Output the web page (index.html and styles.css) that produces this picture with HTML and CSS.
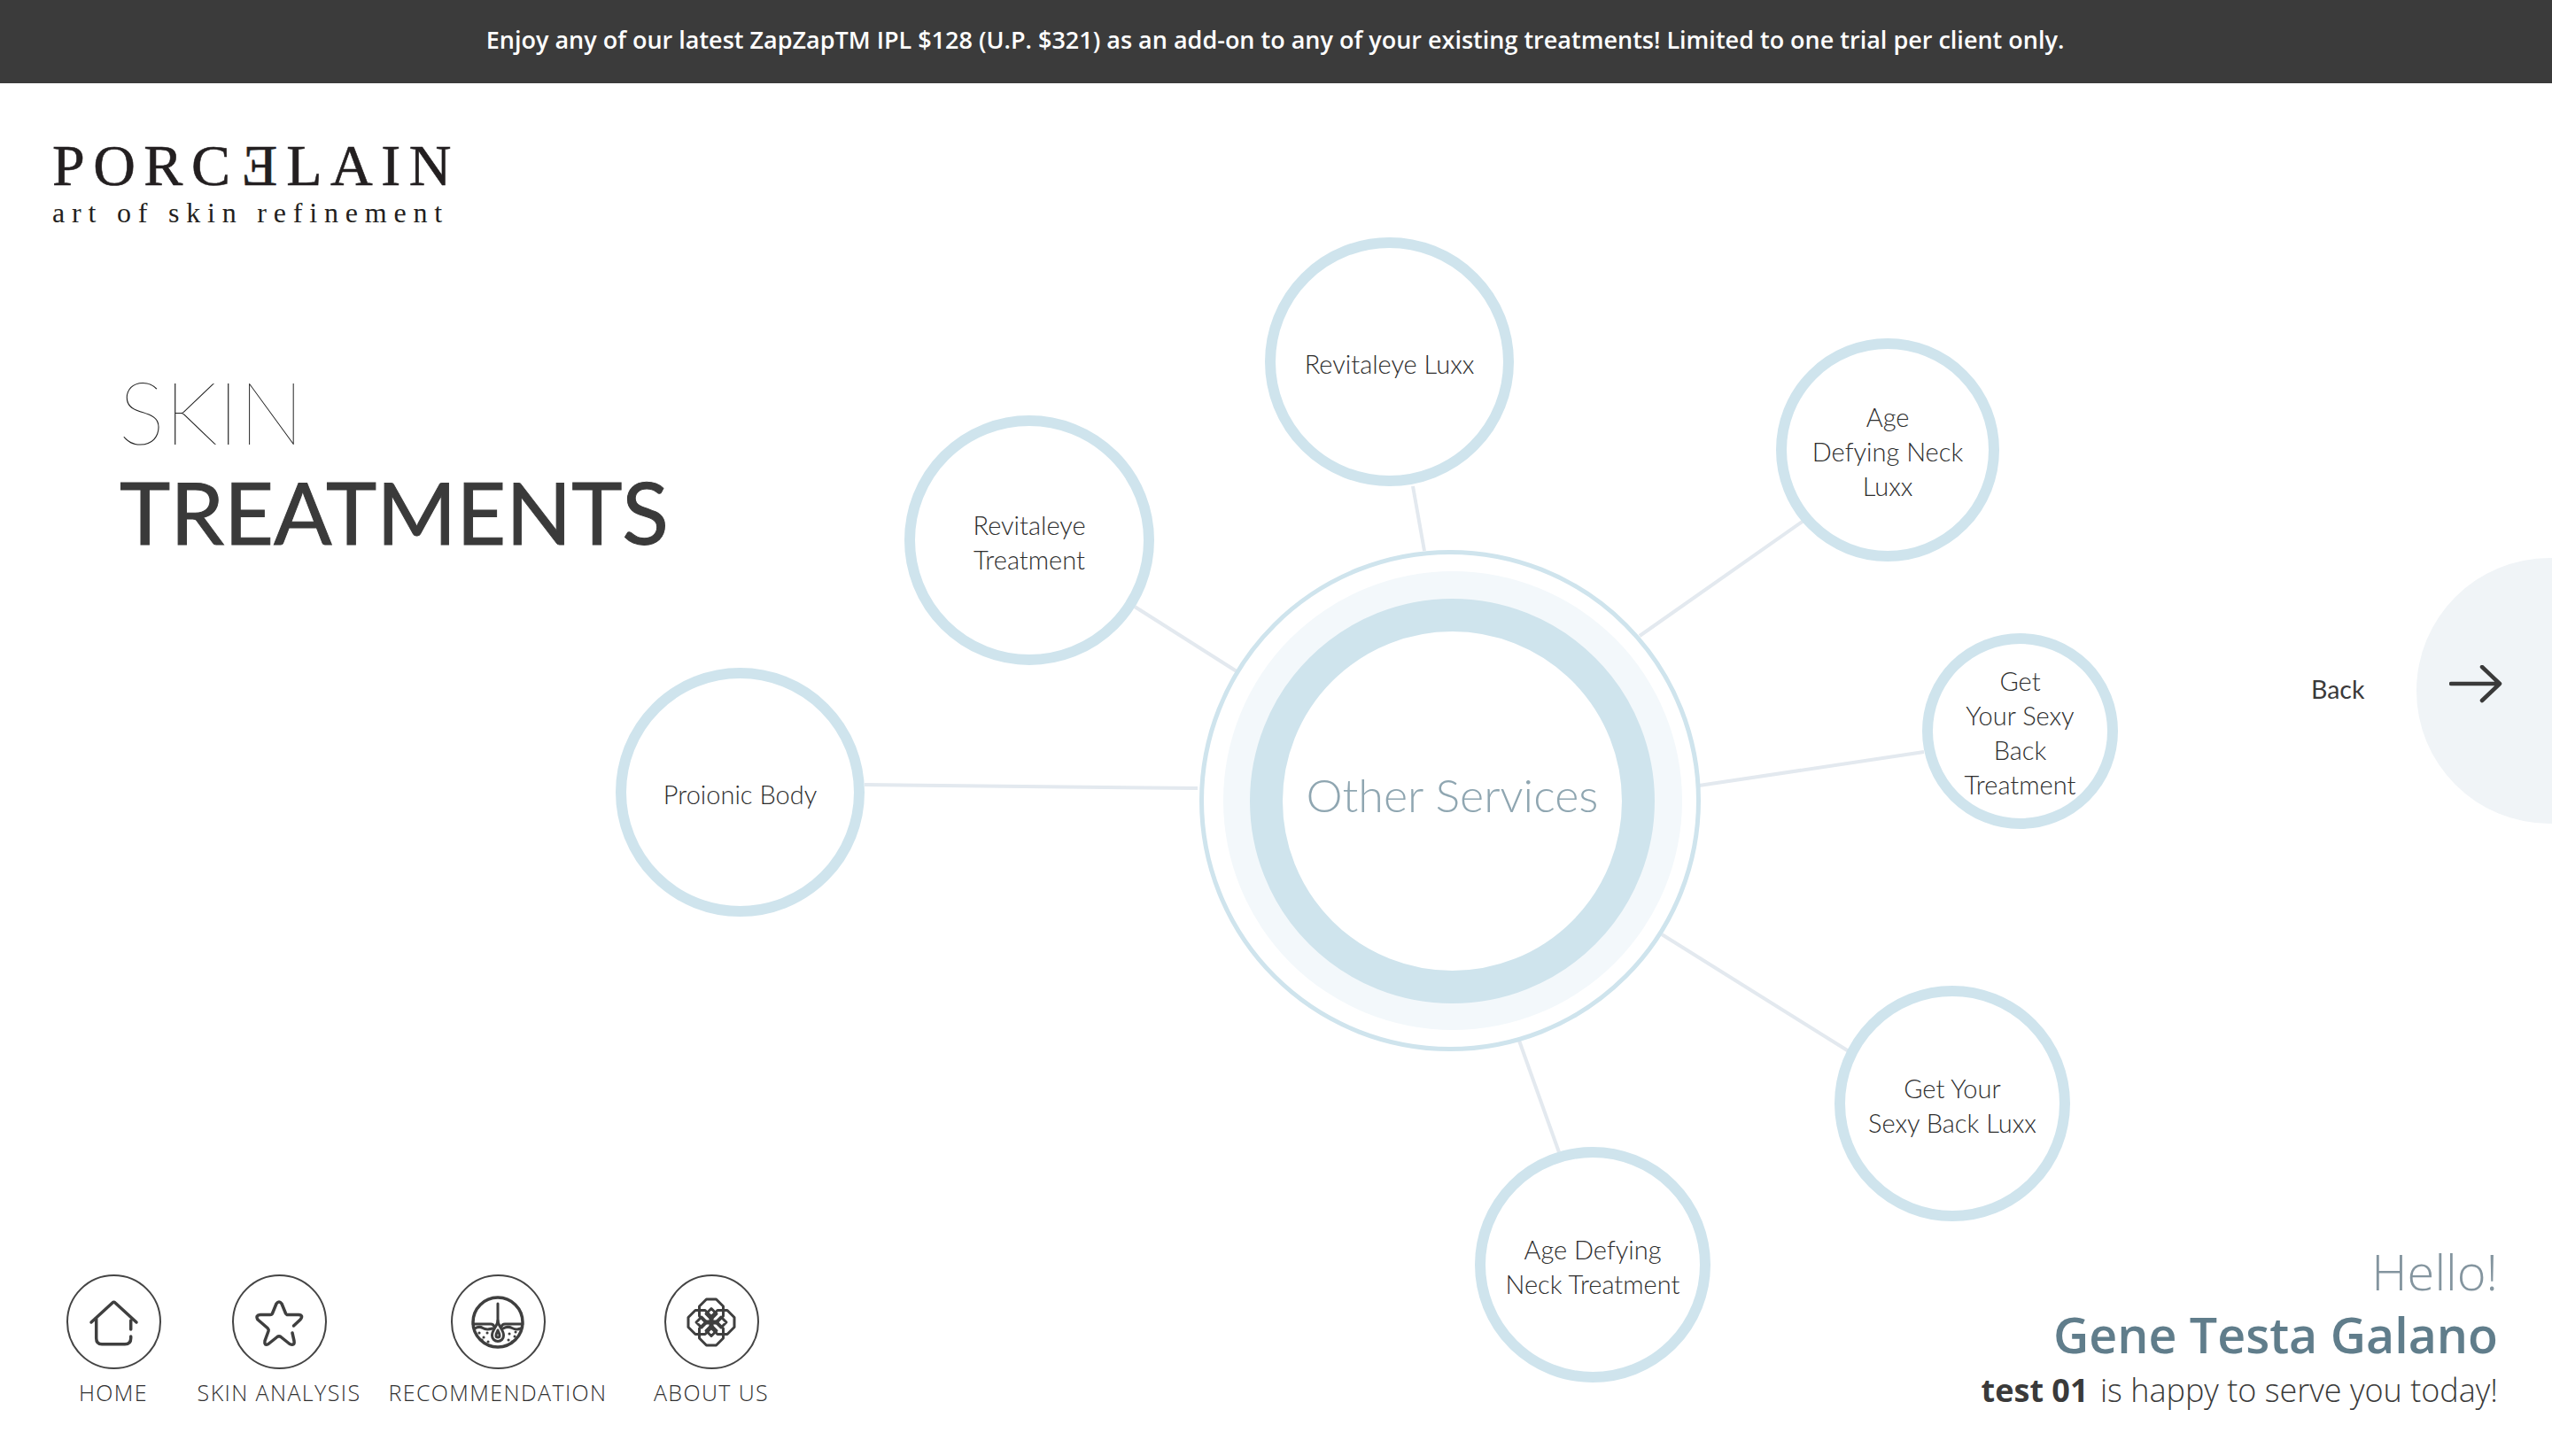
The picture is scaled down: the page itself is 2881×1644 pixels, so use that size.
FILE: index.html
```html
<!DOCTYPE html>
<html lang="en">
<head>
    <meta charset="UTF-8">
    <meta name="viewport" content="width=device-width, initial-scale=1.0">
    <title>Skin Treatments</title>
    <link rel="stylesheet" href="styles.css">
</head>
<body>
    <div class="promo">Enjoy any of our latest ZapZapTM IPL $128 (U.P. $321) as an add-on to any of your existing treatments! Limited to one trial per client only.</div>

    <div class="stage">
        <header class="brand">
            <div class="brand-name">PORC<span class="flip">E</span>LAIN</div>
            <div class="brand-sub">art of skin refinement</div>
        </header>

        <h1 class="title">
            <span class="title-light">SKIN</span>
            <span class="title-bold">TREATMENTS</span>
        </h1>

        <!-- Service wheel -->
        <svg class="spokes" viewBox="0 0 2881 1550" width="2881" height="1550">
            <line x1="1595" y1="455" x2="1608" y2="528"/>
            <line x1="2036" y1="494" x2="1851" y2="624"/>
            <line x1="2172" y1="755" x2="1918" y2="793"/>
            <line x1="2087" y1="1093" x2="1876" y2="961"/>
            <line x1="1760" y1="1207" x2="1715" y2="1081"/>
            <line x1="976" y1="792" x2="1352" y2="796"/>
            <line x1="1281" y1="591" x2="1396" y2="664"/>
        </svg>

        <div class="hub">
            <div class="hub-halo">
                <div class="hub-core"><span class="hub-label">Other Services</span></div>
            </div>
        </div>

        <div class="node node-luxx">Revitaleye Luxx</div>
        <div class="node node-neck-luxx">Age<br>Defying Neck<br>Luxx</div>
        <div class="node node-back">Get<br>Your Sexy<br>Back<br>Treatment</div>
        <div class="node node-back-luxx">Get Your<br>Sexy Back Luxx</div>
        <div class="node node-neck">Age Defying<br>Neck Treatment</div>
        <div class="node node-proionic">Proionic Body</div>
        <div class="node node-eye">Revitaleye<br>Treatment</div>

        <a class="back-label">Back</a>
        <a class="back-btn">
            <svg viewBox="0 0 62 44" width="62" height="44">
                <path d="M2 21H57M37 2L57 21L37 40"/>
            </svg>
        </a>

        <nav class="dock">
            <a class="dock-item dock-home">
                <span class="dock-icon">
                    <svg viewBox="0 0 60 60" width="60" height="60">
                        <path d="M5 30L29 8Q30.5 6.5 32 8L56 30M10.7 25V48Q10.7 54.7 17 54.7H43Q49.7 54.7 49.7 48V46M49.7 38V28"/>
                    </svg>
                </span>
                HOME
            </a>
            <a class="dock-item dock-analysis">
                <span class="dock-icon">
                    <svg viewBox="0 0 60 60" width="60" height="60">
                        <path d="M46.5 34L54 27Q58 22 52 21.5H39Q38 21 37.5 20L33 9Q30 5 27 9L22.5 20Q22 21.5 20 21.5H9Q3 22 6 27L17 36.5Q18.5 38 18 40L14 51Q13 57 18 54.5L28 46.5Q30 45 32 46.5L42 54.5Q48 57 47 51L45 42"/>
                    </svg>
                </span>
                SKIN ANALYSIS
            </a>
            <a class="dock-item dock-reco">
                <span class="dock-icon">
                    <svg viewBox="0 0 60 60" width="60" height="60">
                        <circle cx="30" cy="30" r="28"/>
                        <path class="thin" d="M2 32H22Q25 32 26 35M58 32H38Q35 32 34 35M30 9V30"/>
                        <path class="thin" d="M4 37Q9 34 13 36.5T24 37M36 37Q41 34 46 36.5T56 37"/>
                        <path class="thin" d="M30 28C30 34 37 39 36.5 45A6.5 6.5 0 0 1 23.5 45C23 39 30 34 30 28Z"/>
                        <path class="thin" d="M30 39C31 42 32 43 32 45A2 2 0 0 1 28 45C28 43 29 42 30 39Z"/>
                        <path class="dots" d="M9 42h.1M14 47h.1M18 42h.1M19 52h.1M12 50h.1M43 43h.1M49 46h.1M42 50h.1M50 41h.1M46 52h.1"/>
                    </svg>
                </span>
                RECOMMENDATION
            </a>
            <a class="dock-item dock-about">
                <span class="dock-icon">
                    <svg viewBox="0 0 60 60" width="60" height="60">
                        <path class="thin" d="M24.5 4H35.5L43.5 12V23L35.5 31H24.5L16.5 23V12Z"/>
                        <path class="thin" d="M24.5 29H35.5L43.5 37V48L35.5 56H24.5L16.5 48V37Z"/>
                        <path class="thin" d="M12 16.5H23L31 24.5V35.5L23 43.5H12L4 35.5V24.5Z"/>
                        <path class="thin" d="M37 16.5H48L56 24.5V35.5L48 43.5H37L29 35.5V24.5Z"/>
                        <path class="thin" d="M30 14.5L36 20.5L30 26.5L24 20.5ZM30 33.5L36 39.5L30 45.5L24 39.5ZM19 24L25 30L19 36L13 30ZM41 24L47 30L41 36L35 30Z"/>
                    </svg>
                </span>
                ABOUT US
            </a>
        </nav>

        <aside class="greeting">
            <div class="hello">Hello!</div>
            <div class="client">Gene Testa Galano</div>
            <div class="serve"><strong>test 01</strong> is happy to serve you today!</div>
        </aside>
    </div>
</body>
</html>
```

FILE: styles.css
```css
html, body {
    height: 100%;
}
body {
    font-family: 'Open Sans', sans-serif;
    margin: 0;
    padding: 0;
    background-color: #fff;
    color: #3a3a3a;
    overflow: hidden;
}
.promo {
    height: 94px;
    line-height: 90px;
    padding-right: 2px;
    background: #3b3b3b;
    color: #fff;
    text-align: center;
    font-size: 27px;
    font-weight: 600;
}
.stage {
    position: relative;
    height: 1550px;
}

/* logo */
.brand {
    position: absolute;
    left: 59px;
    top: 63px;
    color: #231f20;
    font-family: 'Liberation Serif', serif;
}
.brand-name {
    font-size: 66px;
    line-height: 60px;
    letter-spacing: 9.5px;
    white-space: nowrap;
    -webkit-text-stroke: 0.6px #231f20;
}
.flip {
    display: inline-block;
    letter-spacing: 0;
    margin: 0 9.5px 0 4px;
    transform: scaleX(-1);
}
.brand-sub {
    font-size: 32px;
    line-height: 36px;
    letter-spacing: 7.8px;
    white-space: nowrap;
    margin-top: 5px;
}

/* page title */
.title {
    position: absolute;
    left: 135px;
    top: 314px;
    margin: 0;
    font-family: Lato, sans-serif;
    font-weight: 400;
    color: #3a3a3a;
}
.title-light, .title-bold {
    display: block;
    white-space: nowrap;
}
.title-light {
    font-size: 98px;
    line-height: 112px;
    font-weight: 100;
    color: #222;
    margin-left: -1px;
}
.title-bold {
    font-size: 97px;
    line-height: 116px;
    -webkit-text-stroke: 1px #3a3a3a;
}

/* wheel */
.spokes {
    position: absolute;
    left: 0;
    top: 0;
}
.spokes line {
    stroke: #e3e9ef;
    stroke-width: 4;
}
.hub {
    position: absolute;
    left: 1354px;
    top: 527px;
    width: 566px;
    height: 566px;
    box-sizing: border-box;
    border: 5px solid #cfe4ed;
    border-radius: 50%;
    background: #fff;
    display: flex;
    align-items: center;
    justify-content: center;
}
.hub-halo {
    width: 518px;
    height: 518px;
    margin-left: 5px;
    border-radius: 50%;
    background: #f3f8fb;
    display: flex;
    align-items: center;
    justify-content: center;
}
.hub-core {
    width: 457px;
    height: 457px;
    box-sizing: border-box;
    border: 37px solid #cfe4ed;
    border-radius: 50%;
    background: #fff;
    display: flex;
    align-items: center;
    justify-content: center;
    color: #8fa6b1;
    font-family: Lato, sans-serif;
    font-size: 52px;
    font-weight: 300;
    white-space: nowrap;
}
.hub-label {
    padding-bottom: 14px;
}
.node {
    position: absolute;
    box-sizing: border-box;
    border: 12px solid #cfe4ed;
    border-radius: 50%;
    background: #fff;
    display: flex;
    align-items: center;
    justify-content: center;
    text-align: center;
    padding-top: 3px;
    font-family: Lato, sans-serif;
    font-size: 29px;
    line-height: 39px;
    font-weight: 300;
    color: #2e2e2e;
    white-space: nowrap;
}
.node-luxx {
    left: 1428px;
    top: 174px;
    width: 281px;
    height: 281px;
}
.node-neck-luxx {
    left: 2005px;
    top: 288px;
    width: 252px;
    height: 252px;
}
.node-back {
    left: 2170px;
    top: 621px;
    width: 221px;
    height: 221px;
}
.node-back-luxx {
    left: 2071px;
    top: 1019px;
    width: 266px;
    height: 266px;
}
.node-neck {
    left: 1665px;
    top: 1201px;
    width: 266px;
    height: 266px;
}
.node-proionic {
    left: 695px;
    top: 660px;
    width: 281px;
    height: 281px;
}
.node-eye {
    left: 1021px;
    top: 375px;
    width: 282px;
    height: 282px;
}

/* back button */
.back-label {
    position: absolute;
    left: 2609px;
    top: 664px;
    font-family: Lato, sans-serif;
    font-size: 28.5px;
    line-height: 40px;
    color: #3a3a3a;
}
.back-btn {
    position: absolute;
    left: 2728px;
    top: 536px;
    width: 153px;
    height: 300px;
    background: #f0f4f7;
    border-radius: 150px 0 0 150px;
}
.back-btn svg {
    position: absolute;
    left: 37px;
    top: 121px;
}
.back-btn path {
    fill: none;
    stroke: #3a3a3a;
    stroke-width: 4.5;
    stroke-linecap: round;
    stroke-linejoin: round;
}

/* bottom nav */
.dock {
    position: absolute;
    left: 33px;
    top: 1345px;
    display: flex;
}
.dock-item {
    display: flex;
    flex-direction: column;
    align-items: center;
    font-size: 25px;
    line-height: 32px;
    letter-spacing: 1.4px;
    font-weight: 300;
    white-space: nowrap;
    color: #2f2f2f;
}
.dock-icon {
    width: 107px;
    height: 107px;
    box-sizing: border-box;
    border: 2px solid #444;
    border-radius: 50%;
    display: flex;
    align-items: center;
    justify-content: center;
    margin-bottom: 10px;
}
.dock-icon path, .dock-icon circle {
    fill: none;
    stroke: #3f3f3f;
    stroke-width: 3.5;
    stroke-linecap: round;
    stroke-linejoin: round;
}
.dock-icon .thin {
    stroke-width: 3;
}
.dock-icon .dots {
    stroke-width: 3;
}
.dock-home {
    width: 190px;
}
.dock-analysis {
    width: 184px;
}
.dock-reco {
    width: 310px;
}
.dock-about {
    width: 172px;
}

/* greeting */
.greeting {
    position: absolute;
    right: 61px;
    top: 1308px;
    text-align: right;
    white-space: nowrap;
}
.hello {
    font-size: 56px;
    line-height: 66px;
    font-weight: 300;
    color: #84959f;
}
.client {
    font-size: 55.5px;
    line-height: 78px;
    font-weight: 600;
    color: #607d8b;
}
.serve {
    font-size: 36px;
    line-height: 48px;
    font-weight: 300;
    color: #3a3a3a;
}
.serve strong {
    font-weight: 700;
    margin-right: 4px;
}
```
